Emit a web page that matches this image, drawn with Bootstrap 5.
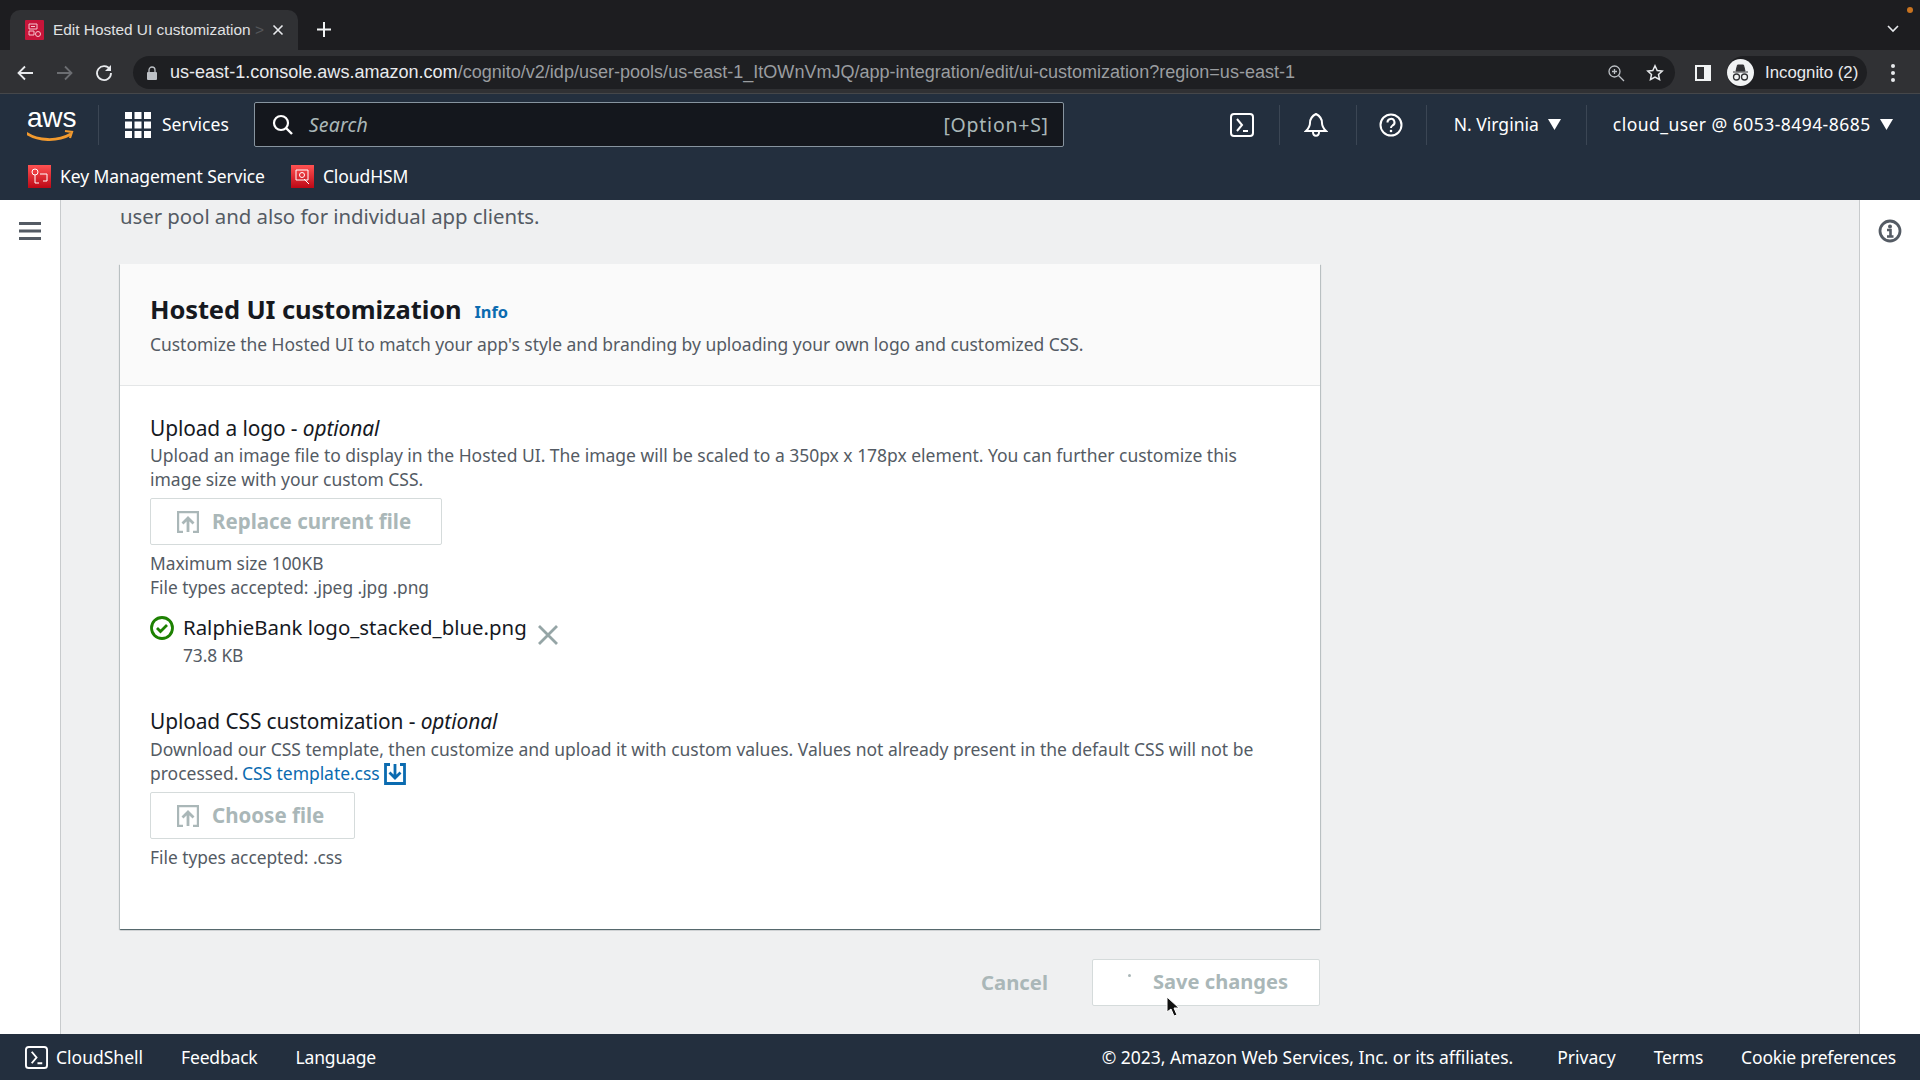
<!DOCTYPE html>
<html lang="en"><head><meta charset="utf-8"><title>Edit Hosted UI customization</title>
<link href="https://cdn.jsdelivr.net/npm/bootstrap@5.3.0/dist/css/bootstrap.min.css" rel="stylesheet">
<style>
html,body{height:1080px;overflow:hidden}
body{font-family:"Noto Sans","Open Sans",sans-serif;background:#eff0f1;color:#16191f;letter-spacing:-.1px}
.tabstrip{height:50px;background:#1d1d20;padding:10px 0 0 10px;position:relative}
.tabitem{width:288px;height:40px;background:#303134;border-radius:10px 10px 0 0;padding:0 14px 0 15px;font-family:"Liberation Sans",sans-serif;font-size:15.4px;color:#e0e1e3;letter-spacing:0}
.tabtitle{width:204px;white-space:nowrap;margin-left:9px;flex:none}
.tabtitle em{font-style:normal;color:#55575a}
.favi{flex:none;border-radius:1px}
.tabclose{margin-left:15px;flex:none}
.tabplus{margin:7px 0 0 18px}
.tabchev{margin:15px 21px 0 auto}
.dotorange{position:absolute;top:7px;right:7px;width:6px;height:6px;border-radius:50%;background:#c9731f}
.toolbar{height:44px;background:#303134;padding:2px 0 0 16px;border-bottom:1px solid #45474a;font-family:"Liberation Sans",sans-serif}
.toolgap1{margin-left:18px}
.toolgap2{margin-left:20px}
.urlbox{width:1542px;height:33px;margin-left:19px;background:#1e1f22;border-radius:17px;font-size:18.05px;color:#9a9da0;letter-spacing:0;padding-left:13px}
.urlbox b{font-weight:400;color:#e8eaed}
.urltext{margin-left:12px;white-space:nowrap}
.urlzoom{margin-left:auto}
.urlstar{margin:0 11px 0 21px}
.sidepanel{margin-left:20px}
.incog{height:33px;background:#1e1f22;border-radius:17px;width:140px;margin-left:16px;font-size:16.8px;color:#e8eaed;letter-spacing:0;padding-left:0}
.incog span{margin-left:11px}
.dotsv{margin-left:23px}
.awshead{height:106px;background:#232f3e;color:#fff;font-size:17.5px;letter-spacing:0}
.row1{height:61px;padding-left:27px}
.row2{height:43px;padding-left:28px;font-size:17.5px;letter-spacing:-.1px}
.awslogo{width:47px;height:40px;position:relative;color:#fff;font:400 28px/25px "Liberation Sans",sans-serif;letter-spacing:-.2px}
.vsep{width:1px;height:40px;background:#3b4654;flex:none}
.sep1{margin-left:24px}
.gridicon{margin-left:26px}
.svclabel{margin-left:11px}
.searchbox{width:810px;height:45px;background:#14171d;border:1px solid #87949f;border-radius:2px;color:#aab7b8;font-size:19.5px;padding:0 14px 0 17px;margin-left:25px}
.searchbox i{margin-left:16px;letter-spacing:.2px}
.searchkey{margin-left:auto;letter-spacing:.75px}
.termicon{margin-left:166px}
.gap25{margin-left:25px}
.gap28{margin-left:28px}
.gap23{margin-left:23px}
.gap22{margin-left:22px}
.gap24{margin-left:24px}
.regionlabel{margin-left:27px}
.userlabel{margin-left:26px;letter-spacing:.46px}
.tri{margin-left:9px}
.keyname{margin-left:9px}
.footname{margin-left:8px}
.hsmicon{margin-left:26px}
.mainrow{height:834px;overflow:hidden}
.sidel{width:61px;background:#fff;border-right:1px solid #c8cbcd;padding:17px 0 0 19px;flex:none}
.sider{width:61px;background:#fff;border-left:1px solid #c8cbcd;padding:17px 0 0 18px;flex:none}
.pagecol{width:1200px;margin-left:59px;flex:none}
.introtext{height:64px;font-size:20.4px;line-height:28px;color:#545b64;padding-top:2px;letter-spacing:-.05px}
.panel{height:665px;background:#fff;box-shadow:0 1px 1px 0 rgba(0,28,36,.5),1px 1px 1px 0 rgba(0,28,36,.15),-1px 1px 1px 0 rgba(0,28,36,.15)}
.panelhead{height:122px;background:#fafafa;border-bottom:1px solid #e4e6e7;padding:25px 30px 0}
.paneltitle{font-size:25.5px;font-weight:700;line-height:40px;letter-spacing:-.12px;color:#16191f}
.infolink{font-size:16.4px;font-weight:700;color:#0b6bb0;margin-left:13px;position:relative;top:3px;text-decoration:none;letter-spacing:0}
.paneldesc{font-size:17.48px;line-height:28px;color:#545b64;letter-spacing:-.03px;margin-top:1px}
.panelbody{padding:27px 30px 0}
.fieldlabel{font-size:20.9px;line-height:30px;color:#16191f;letter-spacing:-.1px}
.fieldlabel2{margin-top:39px;margin-bottom:1px}
.fielddesc{font-size:17.5px;line-height:24px;color:#545b64;letter-spacing:-.02px;max-width:1112px}
.uplbtn{height:47px;margin-top:7px;border:1px solid #d5dbdb;background:#fff;border-radius:2px;color:#aab7b8;font-size:20.5px;font-weight:700;padding:0 30px 0 26px;letter-spacing:0;display:inline-flex;align-items:center;gap:13px}
.hint{font-size:17.35px;line-height:24px;color:#545b64;margin-top:6px;letter-spacing:-.02px}
.filerow{margin-top:14px}
.checkicon{margin-top:3px}
.fileinfo{margin-left:9px}
.csslink{color:#0b6bb0;text-decoration:none;margin-left:-1px;letter-spacing:-.05px}
.dlicon{vertical-align:-5px}
.fname{font-size:20.4px;line-height:28px;color:#16191f;letter-spacing:0}
.fsize{font-size:17.35px;line-height:24px;color:#545b64;margin-top:2px}
.fileclose{margin:11px 0 0 10px}
.actions{margin-top:30px;height:47px}
.cancelbtn{color:#aab7b8;font-size:20.3px;font-weight:700;margin-right:44px;letter-spacing:0}
.savebtn{width:228px;height:47px;background:#fff;border:1px solid #d5dbdb;border-radius:2px;color:#aab7b8;font-size:20.1px;font-weight:700;position:relative;padding-left:60px;letter-spacing:0}
.spindot{position:absolute;left:35px;top:14px;width:3px;height:3px;background:#aab7b8;border-radius:50%}
.ptr{position:absolute;left:73px;top:36px}
.awsfoot{height:46px;background:#232f3e;color:#fff;font-size:17.5px;padding:0 24px 0 25px;letter-spacing:0}
.footlink{margin-left:38px}
.footright{letter-spacing:-.18px}
.footfirst{margin-left:44px}
.copytext{margin-left:auto;letter-spacing:-.01px}
</style></head><body>
<div class="tabstrip d-flex align-items-start">
  <div class="tabitem d-flex align-items-center">
    <svg class="favi" width="19" height="20" viewBox="0 0 19 20"><rect width="19" height="20" fill="#c7153a"/><path d="M4 4h8v5H4zM4 11h5v4H4zM6 6.500h4" stroke="#f7c5ce" fill="none"/><circle cx="13" cy="14" r="2.500" fill="none" stroke="#f7c5ce"/></svg>
    <span class="tabtitle">Edit Hosted UI customization <em>&gt;</em></span>
    <svg width="12" height="12" viewBox="0 0 12 12" class="tabclose"><path d="M1.500 1.500l9 9M10.500 1.500l-9 9" stroke="#e8eaed" stroke-width="1.600"/></svg>
  </div>
  <svg class="tabplus" width="16" height="24" viewBox="0 0 16 24"><path d="M8 5v15M1 12.500h14" stroke="#f1f3f4" stroke-width="2"/></svg>
  <svg class="tabchev" width="12" height="8" viewBox="0 0 12 8"><path d="M1 1l5 5 5-5" stroke="#e8eaed" stroke-width="1.600" fill="none"/></svg>
  <span class="dotorange"></span>
</div>
<div class="toolbar d-flex align-items-center">
  <svg width="20" height="18" viewBox="0 0 20 18"><path d="M17 9H3M9 2.500L2.500 9 9 15.500" stroke="#e8eaed" stroke-width="1.800" fill="none"/></svg>
  <svg class="toolgap1" width="20" height="18" viewBox="0 0 20 18"><path d="M3 9h14M11 2.500L17.500 9 11 15.500" stroke="#6c6e72" stroke-width="1.800" fill="none"/></svg>
  <svg class="toolgap2" width="20" height="20" viewBox="0 0 20 20"><path d="M16 6.500A7 7 0 1 0 17 10" stroke="#e8eaed" stroke-width="1.800" fill="none"/><path d="M17 2v6h-6z" fill="#e8eaed"/></svg>
  <div class="urlbox d-flex align-items-center">
    <svg width="12" height="14" viewBox="0 0 12 14"><path d="M3 6V4a3 3 0 0 1 6 0v2" stroke="#bdc1c6" fill="none" stroke-width="1.300"/><rect x="1" y="6" width="10" height="8" rx="1" fill="#bdc1c6"/></svg>
    <span class="urltext"><b>us-east-1.console.aws.amazon.com</b>/cognito/v2/idp/user-pools/us-east-1_ItOWnVmJQ/app-integration/edit/ui-customization?region=us-east-1</span>
    <svg class="urlzoom" width="18" height="18" viewBox="0 0 18 18"><circle cx="7.500" cy="7.500" r="5.500" stroke="#bdc1c6" stroke-width="1.300" fill="none"/><path d="M11.500 11.500L17 17M5 7.500h5M7.500 5v5" stroke="#bdc1c6" stroke-width="1.300"/></svg>
    <svg class="urlstar" width="18" height="18" viewBox="0 0 18 18"><path d="M9 1.800l2.200 4.700 5 .6-3.700 3.400 1 5L9 13l-4.500 2.500 1-5L1.800 7.100l5-.6z" stroke="#e8eaed" stroke-width="1.500" fill="none"/></svg>
  </div>
  <svg class="sidepanel" width="16" height="16" viewBox="0 0 16 16"><rect x="1" y="1" width="14" height="14" fill="none" stroke="#f1f3f4" stroke-width="2"/><rect x="9" y="1" width="6" height="14" fill="#f1f3f4"/></svg>
  <div class="incog d-flex align-items-center">
    <svg width="27" height="27" viewBox="0 0 27 27"><circle cx="13.500" cy="13.500" r="13.500" fill="#f1f3f4"/><path d="M6 13h15M9 12l1.500-6h6L18 12z" stroke="#303134" fill="#303134"/><circle cx="9.500" cy="18" r="3" fill="none" stroke="#303134" stroke-width="1.300"/><circle cx="17.500" cy="18" r="3" fill="none" stroke="#303134" stroke-width="1.300"/></svg>
    <span>Incognito (2)</span>
  </div>
  <svg class="dotsv" width="6" height="20" viewBox="0 0 6 20"><circle cx="3" cy="3" r="2" fill="#e8eaed"/><circle cx="3" cy="10" r="2" fill="#e8eaed"/><circle cx="3" cy="17" r="2" fill="#e8eaed"/></svg>
</div>
<div class="awshead">
  <div class="row1 d-flex align-items-center">
    <div class="awslogo">aws<svg class="position-absolute start-0 top-0" width="50" height="40" viewBox="0 0 50 40"><path d="M-1 28c12 8 31 9 45 1" stroke="#f29a2e" stroke-width="2.800" fill="none"/><path d="M38 26l7 1-2 6" stroke="#f29a2e" stroke-width="2.200" fill="none"/></svg></div>
    <span class="vsep sep1"></span>
    <svg class="gridicon" width="26" height="26" viewBox="0 0 26 26" fill="#fff"><rect width="7" height="7"/><rect x="9.500" width="7" height="7"/><rect x="19" width="7" height="7"/><rect y="9.500" width="7" height="7"/><rect x="9.500" y="9.500" width="7" height="7"/><rect x="19" y="9.500" width="7" height="7"/><rect y="19" width="7" height="7"/><rect x="9.500" y="19" width="7" height="7"/><rect x="19" y="19" width="7" height="7"/></svg>
    <span class="svclabel">Services</span>
    <div class="searchbox d-flex align-items-center">
      <svg width="21" height="21" viewBox="0 0 21 21"><circle cx="9" cy="9" r="7" stroke="#fff" stroke-width="2.200" fill="none"/><path d="M14 14l6 6" stroke="#fff" stroke-width="2.400"/></svg>
      <i>Search</i><span class="searchkey">[Option+S]</span>
    </div>
    <svg class="termicon" width="24" height="24" viewBox="0 0 24 24"><rect x="1" y="1" width="22" height="22" rx="3" fill="none" stroke="#fff" stroke-width="2"/><path d="M7 6l5 6-5 6M13 18h5" stroke="#fff" stroke-width="2" fill="none"/></svg>
    <span class="vsep gap25"></span>
    <svg class="gap24" width="24" height="26" viewBox="0 0 24 26"><path d="M12 2c-4 2-6 5-6 9 0 3-2 6-4 8h20c-2-2-4-5-4-8 0-4-2-7-6-9z" fill="none" stroke="#fff" stroke-width="2"/><path d="M9 20c0 5 6 5 6 0" fill="none" stroke="#fff" stroke-width="2"/></svg>
    <span class="vsep gap28"></span>
    <svg class="gap22" width="24" height="24" viewBox="0 0 24 24"><circle cx="12" cy="12" r="10.500" fill="none" stroke="#fff" stroke-width="2"/><path d="M8.500 9.500a3.500 3.500 0 1 1 5 3c-1 .6-1.500 1.200-1.500 2.500" fill="none" stroke="#fff" stroke-width="2"/><circle cx="12" cy="18" r="1.300" fill="#fff"/></svg>
    <span class="vsep gap23"></span>
    <span class="regionlabel">N. Virginia</span>
    <svg class="tri" width="13" height="11" viewBox="0 0 13 11"><path d="M0 0h13L6.500 11z" fill="#fff"/></svg>
    <span class="vsep gap25"></span>
    <span class="userlabel">cloud_user @ 6053-8494-8685</span>
    <svg class="tri" width="13" height="11" viewBox="0 0 13 11"><path d="M0 0h13L6.500 11z" fill="#fff"/></svg>
  </div>
  <div class="row2 d-flex align-items-center">
    <svg width="23" height="23" viewBox="0 0 23 23"><defs><linearGradient id="rg" x1="0" y1="1" x2="0" y2="0"><stop offset="0" stop-color="#bd0816"/><stop offset="1" stop-color="#ff5252"/></linearGradient></defs><rect width="23" height="23" fill="url(#rg)"/><circle cx="7" cy="7" r="3" fill="none" stroke="#fff"/><path d="M7 10v8h4M12 9h7v7h-4" fill="none" stroke="#fff"/></svg>
    <span class="keyname">Key Management Service</span>
    <svg class="hsmicon" width="23" height="23" viewBox="0 0 23 23"><rect width="23" height="23" fill="url(#rg)"/><path d="M5 5h12v10H5z" fill="none" stroke="#fff"/><circle cx="11" cy="10" r="2.500" fill="none" stroke="#fff"/><path d="M13 14l5 5" stroke="#fff"/></svg>
    <span class="keyname">CloudHSM</span>
  </div>
</div>
<div class="mainrow d-flex">
  <div class="sidel"><svg width="22" height="20" viewBox="0 0 22 20"><path d="M0 2.500h22M0 10h22M0 17.500h22" stroke="#545b64" stroke-width="3"/></svg></div>
  <div class="flex-grow-1 d-flex flex-column">
    <div class="pagecol">
      <div class="introtext">user pool and also for individual app clients.</div>
      <section class="panel">
        <div class="panelhead">
          <div class="d-flex align-items-center paneltitle">Hosted UI customization<a class="infolink" href="#">Info</a></div>
          <div class="paneldesc">Customize the Hosted UI to match your app's style and branding by uploading your own logo and customized CSS.</div>
        </div>
        <div class="panelbody">
          <div class="fieldlabel">Upload a logo - <i>optional</i></div>
          <div class="fielddesc">Upload an image file to display in the Hosted UI. The image will be scaled to a 350px x 178px element. You can further customize this image size with your custom CSS.</div>
          <div class="uplbtn"><svg width="22" height="22" viewBox="0 0 22 22"><path d="M6 21H1V1h20v20h-5" fill="none" stroke="#aab7b8" stroke-width="2.400"/><path d="M11 21V7M5.500 12.500L11 7l5.500 5.500" fill="none" stroke="#aab7b8" stroke-width="2.800"/></svg>Replace current file</div>
          <div class="hint">Maximum size 100KB<br>File types accepted: .jpeg .jpg .png</div>
          <div class="d-flex filerow">
            <svg class="checkicon" width="24" height="24" viewBox="0 0 24 24"><circle cx="12" cy="12" r="10.500" fill="none" stroke="#1d8102" stroke-width="2.800"/><path d="M7 12l3.500 3.500L17 9" fill="none" stroke="#1d8102" stroke-width="2.800"/></svg>
            <div class="fileinfo"><div class="fname">RalphieBank logo_stacked_blue.png</div><div class="fsize">73.8 KB</div></div>
            <svg class="fileclose" width="22" height="22" viewBox="0 0 22 22"><path d="M2 2l18 18M20 2L2 20" stroke="#95a5a6" stroke-width="2.800"/></svg>
          </div>
          <div class="fieldlabel fieldlabel2">Upload CSS customization - <i>optional</i></div>
          <div class="fielddesc">Download our CSS template, then customize and upload it with custom values. Values not already present in the default CSS will not be processed. <a class="csslink" href="#">CSS template.css <svg class="dlicon" width="22" height="22" viewBox="0 0 22 22"><path d="M6 1.500H1.500v19h19v-19H16" fill="none" stroke="#0b6bb0" stroke-width="2.800"/><path d="M11 1v14M5.500 9.500L11 15l5.500-5.500" fill="none" stroke="#0b6bb0" stroke-width="2.800"/></svg></a></div>
          <div class="uplbtn"><svg width="22" height="22" viewBox="0 0 22 22"><path d="M6 21H1V1h20v20h-5" fill="none" stroke="#aab7b8" stroke-width="2.400"/><path d="M11 21V7M5.500 12.500L11 7l5.500 5.500" fill="none" stroke="#aab7b8" stroke-width="2.800"/></svg>Choose file</div>
          <div class="hint">File types accepted: .css</div>
        </div>
      </section>
      <div class="actions d-flex justify-content-end align-items-center">
        <span class="cancelbtn">Cancel</span>
        <div class="savebtn d-flex align-items-center"><span class="spindot"></span>Save changes
          <svg class="ptr" width="14" height="22" viewBox="0 0 14 22"><path d="M1 1v15l4-3 3 7 3-1-3-7h5z" fill="#111" stroke="#fff"/></svg>
        </div>
      </div>
    </div>
  </div>
  <div class="sider"><svg width="24" height="24" viewBox="0 0 24 24"><circle cx="12" cy="12" r="10" fill="none" stroke="#545b64" stroke-width="2.800"/><circle cx="12" cy="7.500" r="2" fill="#545b64"/><path d="M9 11h3.500v6M9 17.500h6.500" stroke="#545b64" stroke-width="2.600" fill="none"/></svg></div>
</div>
<div class="awsfoot d-flex align-items-center">
  <svg width="23" height="23" viewBox="0 0 24 24"><rect x="1" y="1" width="22" height="22" rx="3" fill="none" stroke="#fff" stroke-width="2"/><path d="M7 6l5 6-5 6M13 18h5" stroke="#fff" stroke-width="2" fill="none"/></svg>
  <span class="footname">CloudShell</span>
  <span class="footlink footright">Feedback</span>
  <span class="footlink footright">Language</span>
  <span class="copytext">© 2023, Amazon Web Services, Inc. or its affiliates.</span>
  <span class="footfirst">Privacy</span>
  <span class="footlink footright">Terms</span>
  <span class="footlink footright">Cookie preferences</span>
</div>
</body></html>
